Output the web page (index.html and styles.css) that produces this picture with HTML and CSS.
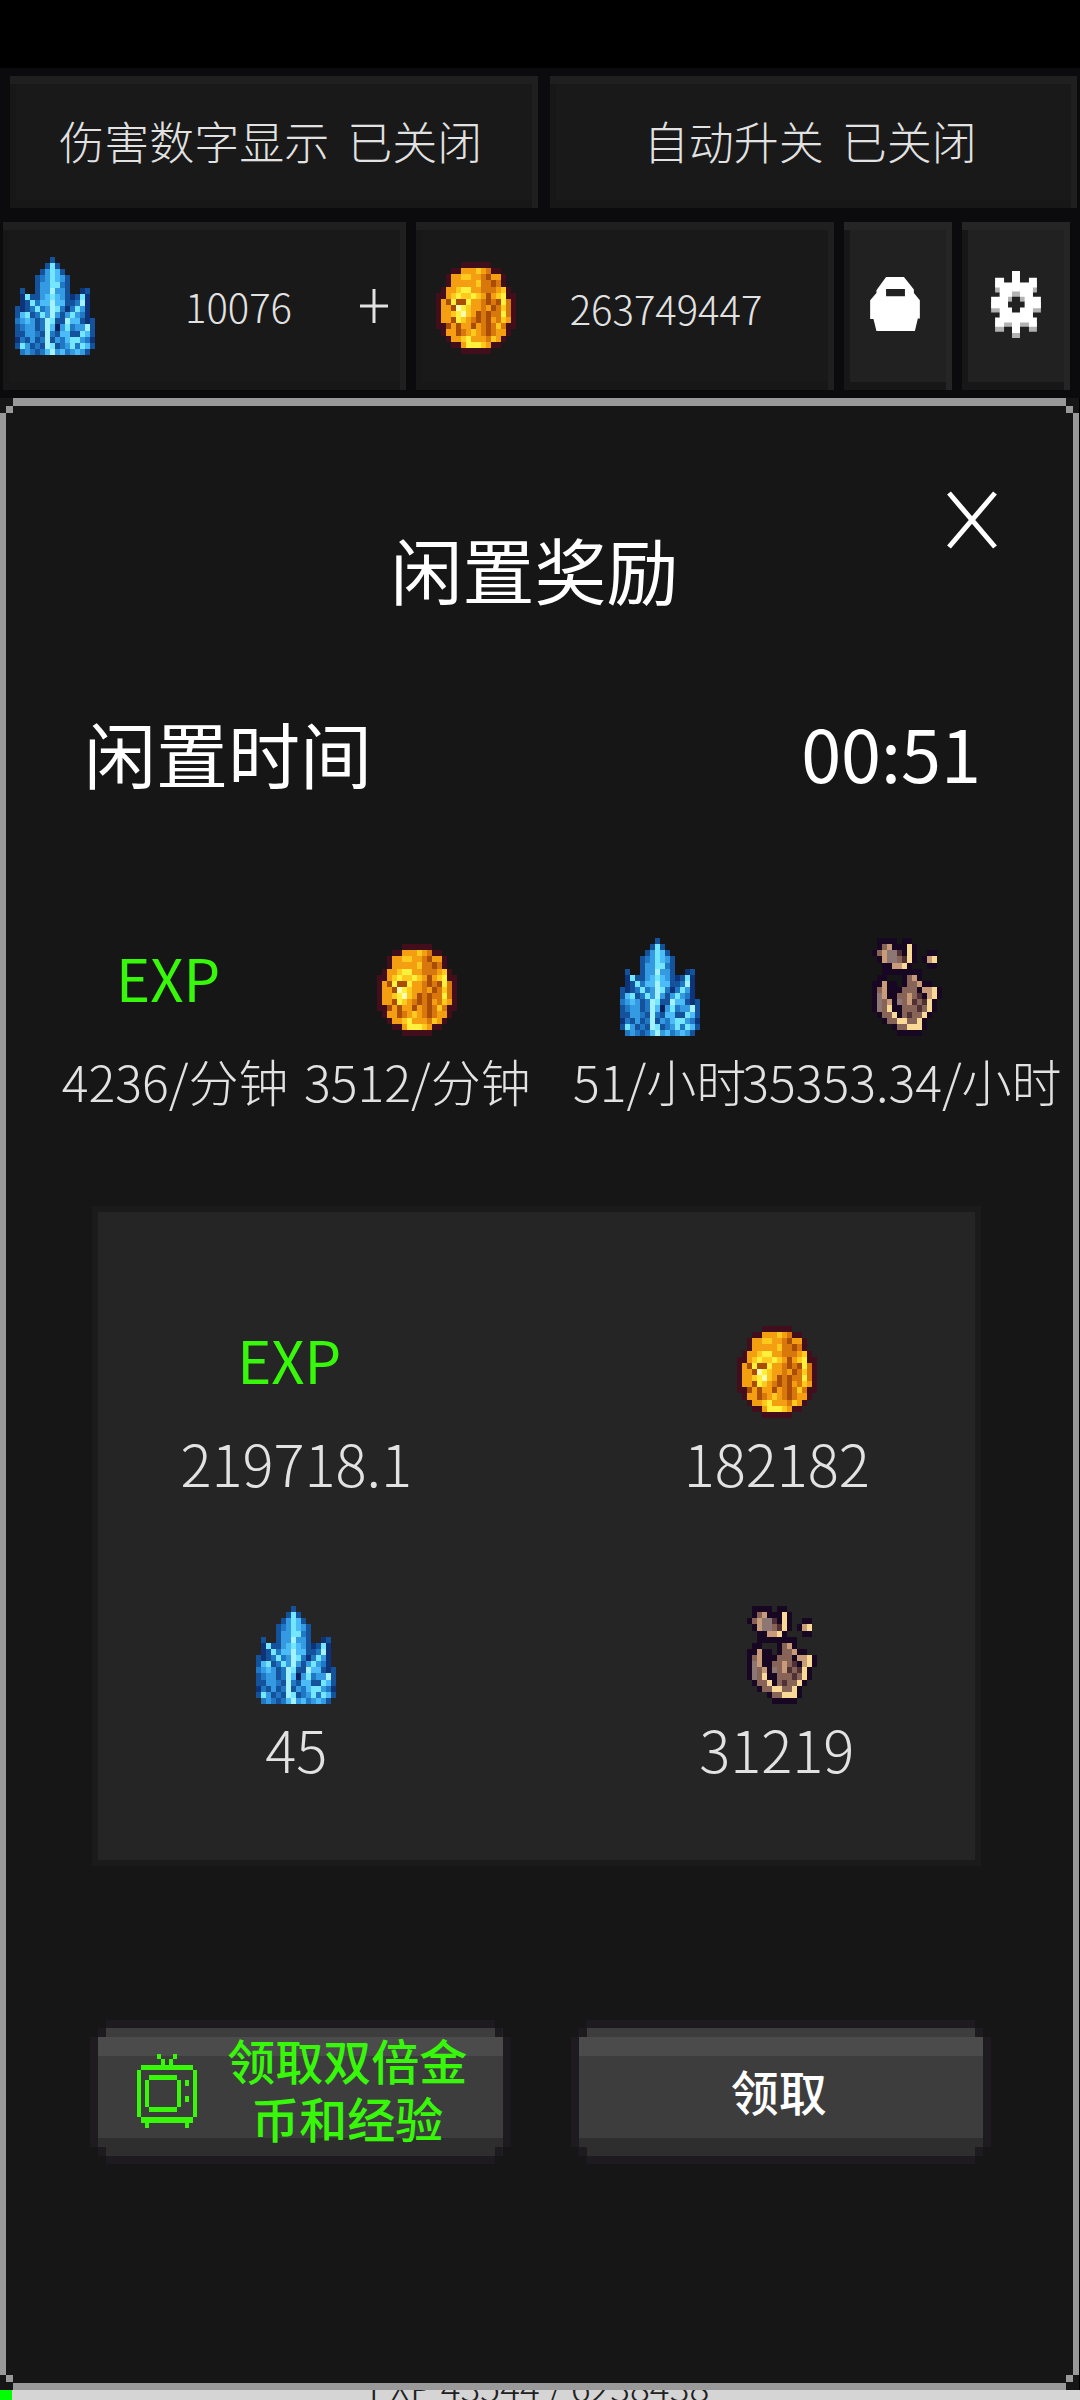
FILE: index.html
```html
<!DOCTYPE html>
<html lang="zh-CN">
<head>
<meta charset="utf-8">
<meta name="viewport" content="width=device-width, initial-scale=1">
<title>闲置奖励</title>
<link rel="stylesheet" href="styles.css">
</head>
<body>
<div class="game">
  <header class="hud">
    <div class="toggles">
      <button class="panel toggle" type="button"><span>伤害数字显示</span> <span>已关闭</span></button>
      <button class="panel toggle" type="button"><span>自动升关</span> <span>已关闭</span></button>
    </div>
    <div class="wallet">
      <div class="panel purse purse-gems">
        <svg class="sprite" data-sprite="crystal" role="img" aria-label="水晶"></svg>
        <span class="amount">10076</span>
        <button class="add" type="button" aria-label="增加水晶"><svg class="plus" viewBox="0 0 28 34" aria-hidden="true"><path d="M14 0v34M0 17h28"/></svg></button>
      </div>
      <div class="panel purse">
        <svg class="sprite" data-sprite="coin" role="img" aria-label="金币"></svg>
        <span class="amount">263749447</span>
      </div>
      <button class="panel tool" type="button" aria-label="锁定">
        <svg class="lock" viewBox="0 0 150 163" aria-hidden="true"><path fill-rule="evenodd" d="M48 0H102L132 38V48L150 70V125H144L135 163H19L10 127H0V70L19 48V40ZM48 36V58H105V36Z"/></svg>
      </button>
      <button class="panel tool" type="button" aria-label="设置">
        <svg class="gear" viewBox="0 0 150 202" aria-hidden="true">
          <path class="gear-shade" d="M12 35h27v30H12zM114 35h24v30h-24zM0 92h150v33H0zM12 155h27v28H12zM114 155h24v28h-24zM63 165h24v37H63zM26 50h100v118H26z"/>
          <path class="gear-face" d="M63 0h24v35h27V20h24v30h-12v28h24v34h-24v28h12v28h-24v-13H87v32H63v-32H39v13H12v-28h14v-28H0V78h26V50H12V20h27v15h24z"/>
          <path class="gear-shade" d="M63 62h24v16h14v14H51V78h12z"/>
          <path class="gear-hole" d="M63 78h24v14h14v18H87v15H63v-15H51V92h12z"/>
        </svg>
      </button>
    </div>
  </header>

  <main class="dialog">
    <div class="title-bar">
      <h1 class="title">闲置奖励</h1>
      <button class="close" type="button" aria-label="关闭"><svg viewBox="0 0 50 58" aria-hidden="true"><path d="M2 2L48 56M48 2L2 56"/></svg></button>
    </div>
    <div class="idle-time"><span>闲置时间</span><span>00:51</span></div>

    <div class="rates">
      <div class="item"><div class="symbol"><span class="exp">EXP</span></div><span class="rate">4236/分钟</span></div>
      <div class="item"><div class="symbol"><svg class="sprite" data-sprite="coin" role="img" aria-label="金币"></svg></div><span class="rate">3512/分钟</span></div>
      <div class="item"><div class="symbol"><svg class="sprite" data-sprite="crystal" role="img" aria-label="水晶"></svg></div><span class="rate">51/小时</span></div>
      <div class="item"><div class="symbol"><svg class="sprite" data-sprite="shell" role="img" aria-label="碎片"></svg></div><span class="rate">35353.34/小时</span></div>
    </div>

    <section class="card">
      <div class="rewards">
        <div class="item"><div class="symbol"><span class="exp">EXP</span></div><span class="reward">219718.1</span></div>
        <div class="item"><div class="symbol"><svg class="sprite" data-sprite="coin" role="img" aria-label="金币"></svg></div><span class="reward">182182</span></div>
        <div class="item"><div class="symbol"><svg class="sprite" data-sprite="crystal" role="img" aria-label="水晶"></svg></div><span class="reward">45</span></div>
        <div class="item"><div class="symbol"><svg class="sprite" data-sprite="shell" role="img" aria-label="碎片"></svg></div><span class="reward">31219</span></div>
      </div>
    </section>

    <div class="actions">
      <button class="claim claim-double" type="button">
        <svg class="tv" viewBox="0 0 60 70" preserveAspectRatio="none" shape-rendering="crispEdges" aria-hidden="true"><path d="M20 0h4v5h-4zM36 0h4v5h-4zM24 5h4v5h-4zM32 5h4v5h-4zM4 10h52v5H4zM0 15h4v45H0zM56 15h4v45h-4zM12 20h28v5H12zM8 25h4v25H8zM40 25h4v25h-4zM12 50h28v5H12zM48 25h4v5h-4zM48 40h4v5h-4zM4 60h52v5H4zM8 65h4v5H8zM48 65h4v5h-4z"/></svg>
        <span>领取双倍金<br>币和经验</span>
      </button>
      <button class="claim" type="button">领取</button>
    </div>
  </main>

  <footer class="level"><span class="level-text">EXP 43544 / 6238438</span></footer>
</div>
<script src="sprites.js"></script>
</body>
</html>
```
FILE: styles.css
```css
* { box-sizing: border-box; }

body {
  margin: 0;
  background: #000;
  color: #e2e2e2;
  font-family: "Noto Sans CJK SC", sans-serif;
  font-weight: 300;
}

button {
  margin: 0;
  padding: 0;
  border: 0;
  background: none;
  color: inherit;
  font: inherit;
}

svg { display: block; }

.game {
  display: flex;
  flex-direction: column;
  min-height: 100vh;
}

/* Top bar */
.hud {
  display: grid;
  gap: 14px;
  margin-top: 68px;
  padding: 8px 0;
  background: #0b0a0c;
}

.panel {
  background: #191919;
  border: solid #1f1f20;
  border-width: 8px 6px 0 0;
  box-shadow: inset 6px -8px 0 #171718;
}

.toggles {
  display: grid;
  grid-template-columns: 1fr 1fr;
  gap: 12px;
  padding: 0 3px 0 10px;
}

.toggle {
  display: flex;
  align-items: center;
  justify-content: center;
  gap: 18px;
  height: 132px;
  padding-bottom: 12px;
  font-size: 45px;
}

.wallet {
  display: grid;
  grid-template-columns: 405fr 420fr 108px 108px;
  gap: 10px;
  height: 168px;
  padding: 0 10px 0 3px;
}

.purse {
  display: flex;
  align-items: center;
  padding: 0 12px 8px;
  font-size: 40px;
}

.purse + .purse { padding: 0 12px 4px 20px; }

.amount {
  flex: 1;
  text-align: center;
}

.purse-gems .amount { padding-left: 22px; }

.plus {
  width: 28px;
  height: 34px;
  fill: none;
  stroke: #e2e2e2;
  stroke-width: 3px;
}

.tool {
  display: flex;
  align-items: center;
  justify-content: center;
  padding-bottom: 12px;
  background: #212121;
  border-color: #252526;
}

.lock { width: 50px; height: 54px; fill: #fff; }
.gear { width: 50px; height: 67px; margin-left: 6px; }
.gear-face { fill: #fff; }
.gear-shade { fill: #b2b2b2; }
.gear-hole { fill: #212121; }

.sprite {
  flex: none;
  width: 80px;
  height: 98px;
}

.sprite[data-sprite="coin"] { height: 92px; }

/* Framed dialog with stepped corners */
.dialog {
  --line: linear-gradient(#999, #999);
  flex: 1;
  margin-right: 1px;
  padding: 72px 52px 0;
  background:
    var(--line) center top / calc(100% - 26px) 8px no-repeat,
    var(--line) center bottom / calc(100% - 26px) 7px no-repeat,
    var(--line) left center / 6px calc(100% - 30px) no-repeat,
    var(--line) right center / 6px calc(100% - 30px) no-repeat,
    var(--line) left 6px top 8px / 7px 7px no-repeat,
    var(--line) right 6px top 8px / 7px 7px no-repeat,
    var(--line) left 6px bottom 8px / 7px 7px no-repeat,
    var(--line) right 6px bottom 8px / 7px 7px no-repeat,
    #161616;
}

.title-bar {
  display: grid;
  grid-template-columns: 90px 1fr 90px;
}

.title {
  grid-column: 2;
  margin: 44px 10px 0 0;
  text-align: center;
  font-size: 72px;
  font-weight: 400;
  line-height: 108px;
  color: #fff;
}

.close {
  justify-self: end;
  align-self: start;
  margin: 21px 30px 0 0;
}

.close svg {
  width: 50px;
  height: 58px;
  fill: none;
  stroke: #fff;
  stroke-width: 5px;
}

.idle-time {
  display: flex;
  justify-content: space-between;
  margin-top: 74px;
  padding: 0 46px 0 32px;
  font-size: 72px;
  font-weight: 400;
  line-height: 112px;
  color: #fff;
}

.rates {
  display: grid;
  grid-template-columns: repeat(4, minmax(0, 1fr));
  margin: 130px 4px 0 2px;
}

.item {
  display: flex;
  flex-direction: column;
  align-items: center;
  white-space: nowrap;
}

.symbol {
  display: flex;
  align-items: flex-end;
  height: 98px;
}

.exp {
  padding: 0 14px 20px 0;
  font-size: 58px;
  font-weight: 400;
  line-height: 78px;
  color: #37f808;
}

.rate {
  margin-top: 8px;
  font-size: 50px;
  line-height: 72px;
}

.card {
  margin: 96px 52px 0 46px;
  padding: 108px 0 72px;
  background: #252525;
  box-shadow: 0 0 0 6px #1b1b1c;
}

.rewards {
  display: grid;
  grid-template-columns: 1fr 1fr;
  row-gap: 104px;
  margin: 0 -42px;
}

.reward {
  margin-top: 4px;
  font-size: 58px;
  line-height: 80px;
}

.actions {
  display: grid;
  grid-template-columns: 1fr 1fr;
  gap: 76px;
  margin: 168px 44px 0 46px;
}

/* Bevelled button with stepped corners */
.claim {
  --edge: linear-gradient(#1d1b20, #1d1b20);
  display: flex;
  align-items: center;
  justify-content: center;
  height: 128px;
  background:
    var(--edge) left top / 8px 9px no-repeat,
    var(--edge) right top / 8px 9px no-repeat,
    var(--edge) left bottom / 8px 9px no-repeat,
    var(--edge) right bottom / 8px 9px no-repeat,
    linear-gradient(#3d3d3d 9px, #4b4b4b 9px 28px, #3d3d3d 28px 110px, #2e2e2e 110px);
  box-shadow: 0 0 0 8px #1d1b20;
  clip-path: polygon(8px -8px, calc(100% - 8px) -8px, calc(100% - 8px) 0, 100% 0, 100% 9px, calc(100% + 8px) 9px, calc(100% + 8px) calc(100% - 9px), 100% calc(100% - 9px), 100% 100%, calc(100% - 8px) 100%, calc(100% - 8px) calc(100% + 8px), 8px calc(100% + 8px), 8px 100%, 0 100%, 0 calc(100% - 9px), -8px calc(100% - 9px), -8px 9px, 0 9px, 0 0, 8px 0);
  color: #fff;
  font-size: 48px;
  font-weight: 500;
  line-height: 58px;
}

.claim:last-child { padding: 0 4px 4px 0; }

.claim-double {
  gap: 30px;
  padding: 0 0 8px 4px;
  color: #37f808;
}

.tv {
  width: 60px;
  height: 74px;
  margin-top: 6px;
  fill: #37f808;
}

/* Level progress, mostly hidden under the dialog */
.level {
  display: flex;
  align-items: flex-end;
  justify-content: center;
  height: 10px;
  padding-right: 14px;
  overflow: hidden;
  border-left: 12px solid #0f0;
  background: #d5d5d5;
  color: #222;
  font-size: 37px;
  line-height: 36px;
}

.level-text { margin-bottom: -4px; }
```
FILE: sprites.js
```js
// Pixel sprites: one character per cell, "." is transparent.
const SPRITES = {
  crystal: {
    colors: { k: "#08205c", a: "#0d3478", b: "#14529c", c: "#2078c4", d: "#349ae2", e: "#4cbcf8", f: "#74e6ff", w: "#a4f2ff" },
    rows: [
      ".......b........",
      "......bfb.......",
      ".....bdfeb......",
      "....bcdfedb.....",
      "....bddffcb.....",
      ".b..bddwddb..ab.",
      ".afbbdefedbabfa.",
      ".abfceeweebbcwa.",
      "babcfcdwfcacfda.",
      "befbcfdwdbdfdca.",
      "cdedbcwfbbweebab",
      "bcddbcwekdfcddwb",
      "bbddcbwcbeebbfeb",
      "acbdbcwbdceffdca",
      "bfdbcbwfbcdfcfeb",
      ".cdcbcewdecdedb."
    ]
  },
  coin: {
    colors: { r: "#430e1c", n: "#a94c04", m: "#d8780c", o: "#f49f12", y: "#ffc91e", l: "#fff03c", w: "#fffbb0" },
    rows: [
      ".....rrrrrr.....",
      "...rroooyomrr...",
      "..rooyyoomnoor..",
      "..roooooymmnmr..",
      ".rooylloommmoyr.",
      "rroylyylyonoylrr",
      "ronlnnloomnmnlmr",
      "roonwlyoomonmymr",
      "rooylwyonmnmmlmr",
      "roonlyomnmnomyor",
      "rrnonoonomnmymrr",
      ".roonmoyomnmoor.",
      "..rooylooomyor..",
      "...rrolllyorr...",
      ".....rrrrrr....."
    ]
  },
  shell: {
    colors: { k: "#180722", n: "#4f3034", b: "#886458", g: "#8d7774", t: "#c89c78", l: "#f8da96" },
    rows: [
      "...kkkk.kk......",
      "...kbtkkklk.....",
      "..kbtggnklk..kk.",
      "...ktggbnlk.ktl.",
      "....kkttlk...kk.",
      "....kkkkkkkk....",
      "...kk...kbtk....",
      "..kktkk.kbbtkk..",
      "..kbtkkkbbbkttlk",
      "..kgtkkbbtbnktlk",
      "..kgbtkgbtnbnlk.",
      "..kgblkkbbbnblk.",
      "...kbblkbnbblk..",
      "....kbbllbblk...",
      "......kbblllk...",
      ".......kkkkk...."
    ]
  }
};

document.querySelectorAll("[data-sprite]").forEach((svg) => {
  const { colors, rows } = SPRITES[svg.dataset.sprite];
  svg.setAttribute("viewBox", `0 0 16 ${rows.length}`);
  svg.setAttribute("preserveAspectRatio", "none");
  svg.setAttribute("shape-rendering", "crispEdges");
  Object.entries(colors).forEach(([key, fill]) => {
    let d = "";
    rows.forEach((row, y) => {
      [...row].forEach((cell, x) => {
        if (cell === key) d += `M${x} ${y}h1v1h-1z`;
      });
    });
    const path = document.createElementNS("http://www.w3.org/2000/svg", "path");
    path.setAttribute("d", d);
    path.setAttribute("fill", fill);
    svg.append(path);
  });
});
```
